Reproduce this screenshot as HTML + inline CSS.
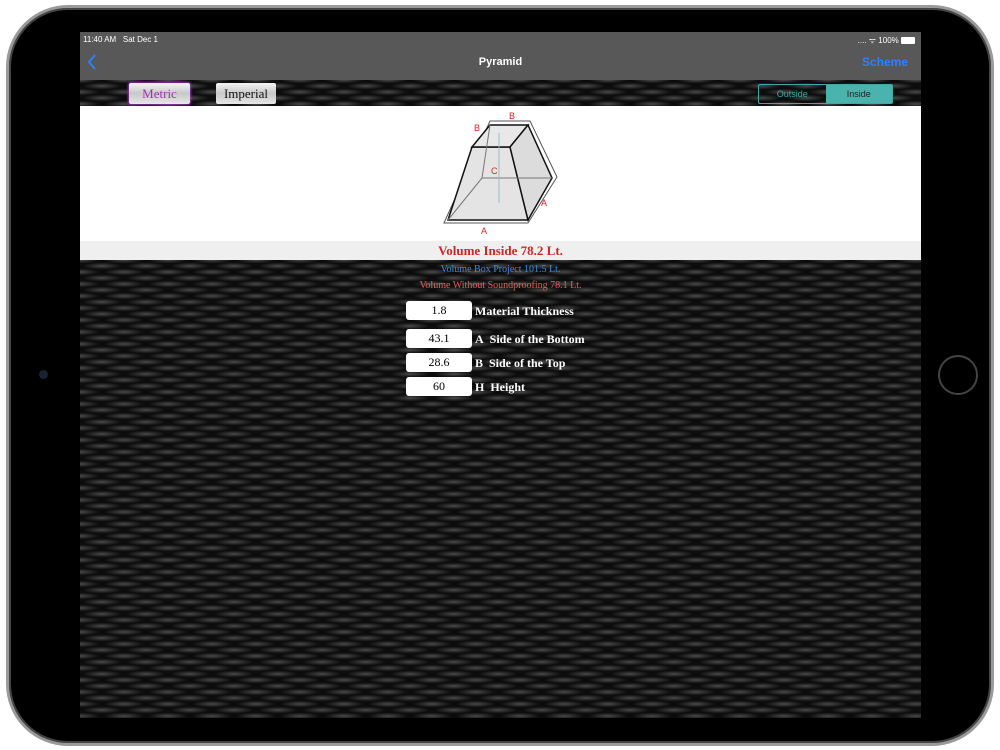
<!DOCTYPE html>
<html><head><meta charset="utf-8"><style>
*{margin:0;padding:0;box-sizing:border-box}
body{width:1000px;height:750px;background:#fff;position:relative;overflow:hidden;font-family:"Liberation Sans",sans-serif}
.ipad{position:absolute;left:6px;top:5px;width:988px;height:741px;border-radius:62px;background:#000;border:3px solid #9a9a9a;box-shadow:inset 0 0 0 2px #444}
.screen{position:absolute;left:80px;top:32px;width:841px;height:686px;overflow:hidden;
background-color:#0c0c0c;
background-image:radial-gradient(ellipse 20px 3.5px at 50% 50%,#4a4a4a 0%,#222 60%,transparent 100%),radial-gradient(ellipse 20px 3.5px at 50% 50%,#4a4a4a 0%,#222 60%,transparent 100%);
background-size:44px 12px,44px 12px;background-position:0 0,22px 6px}
.status{position:absolute;left:0;top:0;width:841px;height:48px;background:#585858;color:#fff}
.white{position:absolute;left:0;top:74px;width:841px;height:154px;background:#fff}
.seg{position:absolute;top:51px;height:21px;border-radius:2px;font-family:"Liberation Serif",serif;font-size:13px;text-align:center;line-height:21px;background:linear-gradient(#f4f4f4,#c8c8c8 50%,#e8e8e8)}
.inp{position:absolute;left:326px;width:66px;height:19px;background:#fff;border-radius:3px;font-family:"Liberation Serif",serif;font-size:12px;text-align:center;line-height:19px;color:#000}
.lbl{position:absolute;left:395px;color:#fff;font-family:"Liberation Serif",serif;font-size:12px;font-weight:bold}
</style></head><body>
<div class="ipad"></div>
<div style="position:absolute;left:39px;top:370px;width:9px;height:9px;border-radius:50%;background:#1a2230"></div>
<div style="position:absolute;left:938px;top:355px;width:40px;height:40px;border-radius:50%;border:2px solid #444"></div>
<div class="screen">
 <div class="status">
  <div style="position:absolute;left:3px;top:3px;font-size:8px">11:40 AM&nbsp;&nbsp;&nbsp;Sat Dec 1</div>
  <div style="position:absolute;right:6px;top:3px;font-size:8px">.... ᯤ 100% <span style="display:inline-block;width:14px;height:7px;background:#fff;vertical-align:-1px;border-radius:1px"></span></div>
  <svg style="position:absolute;left:7px;top:22px" width="10" height="16"><path d="M8 1 L2 8 L8 15" stroke="#2f7fff" stroke-width="2" fill="none"/></svg>
  <div style="position:absolute;left:0;width:841px;top:24px;text-align:center;font-size:11px;font-weight:bold">Pyramid</div>
  <div style="position:absolute;right:13px;top:23px;font-size:12px;color:#2f7fff;font-weight:bold">Scheme</div>
 </div>
 <div class="seg" style="left:49px;width:61px;color:#a030b0;box-shadow:0 0 2px 1px #a030c0">Metric</div>
 <div class="seg" style="left:136px;width:60px;color:#111">Imperial</div>
 <div style="position:absolute;left:678px;top:52px;width:135px;height:20px;border:1px solid #3fa8a4;border-radius:2px;font-size:9px;display:flex">
  <div style="flex:1;text-align:center;line-height:18px;color:#3fa8a4">Outside</div>
  <div style="flex:1;text-align:center;line-height:18px;background:#4bb3ae;color:#222">Inside</div>
 </div>
 <div class="white">
  <svg style="position:absolute;left:320px;top:1px" width="160" height="134" viewBox="400 107 160 134">
   <polygon points="444,223 490,121 530,121 557,177 528,223" fill="#fff" stroke="#555" stroke-width="1"/>
   <polygon points="448,220 472,147 510,147 528,220" fill="#e4e4e4" stroke="#111" stroke-width="1.5"/>
   <polygon points="472,147 490,125 528,125 510,147" fill="#e8e8e8" stroke="#111" stroke-width="1.5"/>
   <polygon points="510,147 528,125 552,178 528,220" fill="#dcdcdc" stroke="#111" stroke-width="1.5"/>
   <path d="M490 125 L482 178 L552 178 M482 178 L448 220" stroke="#777" fill="none"/>
   <line x1="499" y1="133" x2="499" y2="203" stroke="#9bc" stroke-width="1"/>
   <g fill="#d22" font-size="9" font-family="Liberation Sans"><text x="509" y="119">B</text><text x="474" y="131">B</text><text x="491" y="174">C</text><text x="541" y="206">A</text><text x="481" y="234">A</text></g>
  </svg>
  <div style="position:absolute;left:0;top:135px;width:841px;height:19px;background:#efefef;text-align:center;color:#c8272a;font-family:'Liberation Serif',serif;font-size:13px;font-weight:bold;line-height:19px">Volume Inside 78.2 Lt.</div>
 </div>
 <div style="position:absolute;left:0;top:232px;width:841px;text-align:center;color:#3b8be0;font-family:'Liberation Serif',serif;font-size:10px">Volume Box Project 101.5 Lt.</div>
 <div style="position:absolute;left:0;top:248px;width:841px;text-align:center;color:#e0605a;font-family:'Liberation Serif',serif;font-size:10px">Volume Without Soundproofing 78.1 Lt.</div>
 <div class="inp" style="top:269px">1.8</div><div class="lbl" style="top:272px">Material Thickness</div>
 <div class="inp" style="top:297px">43.1</div><div class="lbl" style="top:300px">A&nbsp; Side of the Bottom</div>
 <div class="inp" style="top:321px">28.6</div><div class="lbl" style="top:324px">B&nbsp; Side of the Top</div>
 <div class="inp" style="top:345px">60</div><div class="lbl" style="top:348px">H&nbsp; Height</div>
</div>
</body></html>
